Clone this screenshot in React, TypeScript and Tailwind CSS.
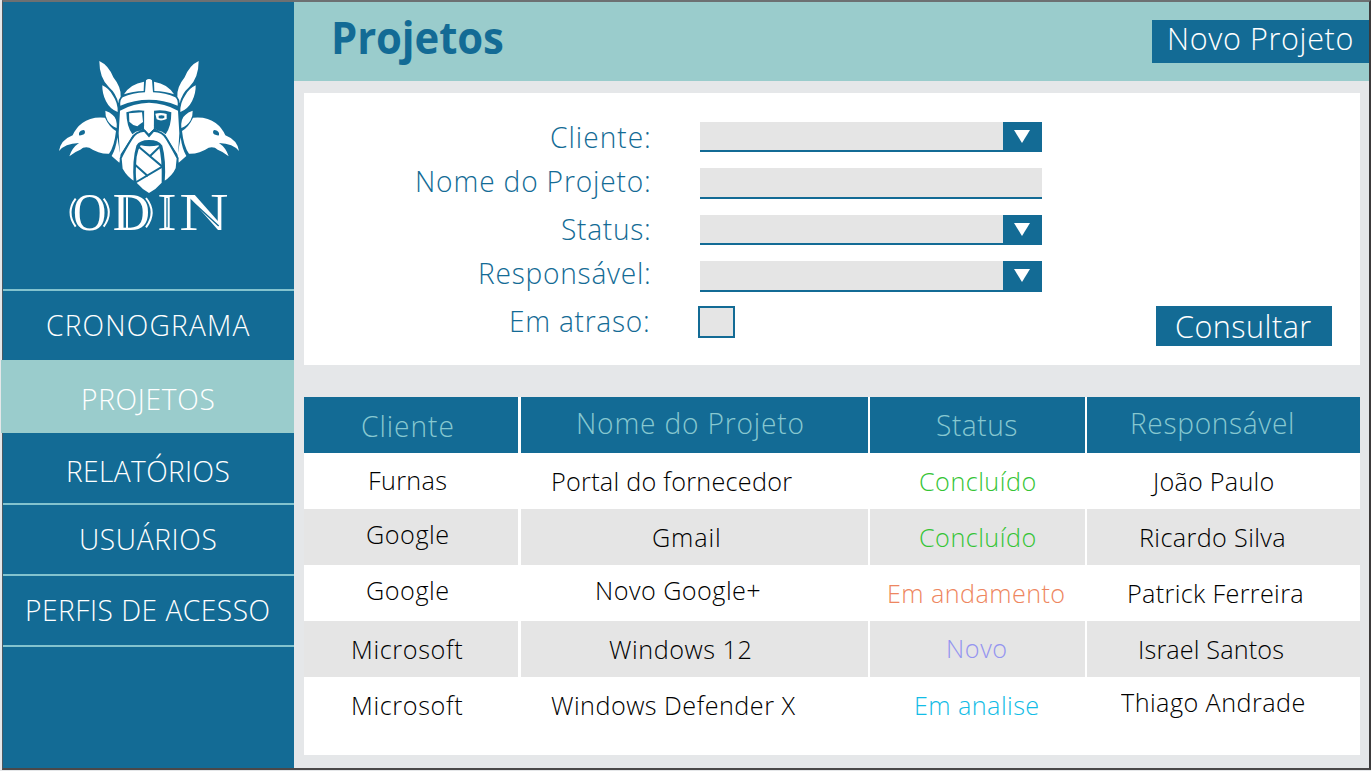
import { useLayoutEffect, useRef, useState } from "react";

type TextProps = { children: string; w: number; squeeze?: number; className?: string };

/* One line of text, slightly narrowed and tracked so that its ink is exactly `w` pixels wide. */
function Fit({ children, w, squeeze = 0.97, className = "" }: TextProps) {
  const ref = useRef<HTMLSpanElement>(null);
  const [fit, setFit] = useState({ gap: 0, left: 0 });
  useLayoutEffect(() => {
    const el = ref.current;
    const ctx = document.createElement("canvas").getContext("2d");
    if (!el || !ctx) return;
    const cs = getComputedStyle(el);
    ctx.font = `${cs.fontWeight} ${cs.fontSize} ${cs.fontFamily}`;
    const m = ctx.measureText(children);
    const ink = m.actualBoundingBoxLeft + m.actualBoundingBoxRight;
    setFit({ gap: (w / squeeze - ink) / (children.length - 1), left: m.actualBoundingBoxLeft * squeeze });
  }, [children, w, squeeze]);
  return (
    <div className={className}>
      <span
        ref={ref}
        className="inline-block origin-left whitespace-nowrap"
        style={{ letterSpacing: fit.gap, marginLeft: fit.left, transform: `scaleX(${squeeze})` }}
      >
        {children}
      </span>
    </div>
  );
}

function Half() {
  return (
    <g>
      <path d="M148 33Q176 46 190 82Q214 112 212 140Q205 148 205 160Q198 130 177 112Q148 84 148 33Z" />
      <path d="M157 106Q176 114 189 137Q204 158 203 186Q180 178 168 154Q156 130 157 106Z" />
      <path d="M166 182Q180 186 188 195Q202 205 200 234Q182 226 173 212Q165 198 166 182Z" />
      <path
        fillRule="evenodd"
        d="M165 203Q122 199 97 219Q78 233 68 256Q32 270 27 303Q44 281 87 279Q66 293 58 319Q74 305 91 299Q101 289 118 293Q146 312 177 311Q193 290 198 243Q177 230 165 203ZM87 249Q91 240 102 240Q108 246 102 253Q94 257 87 256Z"
      />
      <path d="M202 262L212 320L208 338L185 318Q198 296 202 262Z" />
      <path d="M222 133Q240 102 282 95L281 123Q248 124 222 133Z" />
    </g>
  );
}

function Logo() {
  return (
    <svg viewBox="0 0 600 570" className="ml-[47px] mt-12 h-[190px] w-[200px] overflow-visible" fill="#fff">
      <Half />
      <g transform="matrix(-1 0 0 1 594 0)">
        <Half />
      </g>
      <path d="M288 91Q297 83 306 91L309 127Q348 129 376 142Q385 149 383 167Q297 132 211 167Q209 149 218 142Q248 129 285 127Z" />
      <path d="M210 182Q250 159 297 158Q344 159 384 182L388 250L384 316L345 256H249L210 316L206 250Z" />
      <g fill="#136b95">
        <path d="M229 187Q256 178 283 182L283 228L272 243Q260 240 247 253Q230 230 229 187Z" />
        <path d="M312 182Q340 178 364 187Q364 230 347 253Q334 240 322 243L311 228Z" />
        <path d="M281 225L283 238L296 251L310 238L312 225L322 243L330 252L297 265L262 252L272 243Z" />
      </g>
      <path d="M283 184H311V236L297 250L283 236Z" />
      <path d="M237 190L276 187L279 216Q270 221 262 229Q249 227 238 215Z" />
      <path fillRule="evenodd" d="M316 191Q333 186 350 192V207Q333 215 320 208ZM326 197V204Q335 208 343 203V197Q334 194 326 197Z" />
      <path
        stroke="#136b95"
        strokeWidth="6"
        d="M283 242Q256 245 245 266Q223 301 212 325L215 357Q230 384 254 398Q249 330 262 288Q270 273 297 273Q324 273 334 288Q346 330 341 398Q370 379 380 355L383 325Q370 300 350 266Q339 245 311 242L297 258Z"
      />
      <path d="M272 286Q298 292 326 286Q337 325 335 398Q318 418 297 429Q277 418 266 404Q253 400 260 320Q263 300 272 286Z" />
      <path d="M267 291L337 350L259 396M328 291L298 320M256 345L294 379" fill="none" stroke="#136b95" strokeWidth="6" />
      <g fontFamily="'Liberation Serif', serif" fontSize="160">
        <text x="69" y="540" textLength="100" lengthAdjust="spacingAndGlyphs">O</text>
        <text x="188" y="540" textLength="112" lengthAdjust="spacingAndGlyphs">D</text>
        <text x="322" y="540" textLength="58" lengthAdjust="spacingAndGlyphs">I</text>
        <text x="388" y="540" textLength="148" lengthAdjust="spacingAndGlyphs">N</text>
      </g>
      <g fill="none" stroke="#fff" strokeWidth="6">
        <path d="M77 446Q46 487 77 530M161 446Q192 487 161 530" />
        <path d="M231 442V534M288 444Q322 487 288 532" />
      </g>
      <path d="M351 444V532M424 452L506 528" fill="none" stroke="#136b95" strokeWidth="4" />
    </svg>
  );
}

function Arrow() {
  return (
    <div className="flex h-full w-[39px] justify-center bg-[#136b95] pr-px pt-2">
      <svg viewBox="0 0 16 13" className="h-[13px] w-4" fill="#fff">
        <path d="M0 0H16L8 13Z" />
      </svg>
    </div>
  );
}

function Field({ select }: { select?: boolean }) {
  return (
    <div className="flex h-[30.4px] w-[342.4px] justify-end self-end border-b-2 border-[#136b95] bg-[#e5e5e5]">
      {select && <div className="h-[30px]"><Arrow /></div>}
    </div>
  );
}

const labels = [
  { t: "Cliente:", w: 98, c: "mt-[29px] ml-[247px]" },
  { t: "Nome do Projeto:", w: 232, c: "mt-[14px] ml-[113px]" },
  { t: "Status:", w: 87, c: "mt-[18px] ml-[258px]" },
  { t: "Responsável:", w: 169, c: "mt-[14px] ml-[176px]" },
  { t: "Em atraso:", w: 137, c: "mt-[18px] ml-[207px]" },
];

const heads = [
  { t: "Cliente", w: 91, c: "mt-[14px] ml-[58px]" },
  { t: "Nome do Projeto", w: 225, c: "mt-[11px] ml-[57px]" },
  { t: "Status", w: 80, c: "mt-[13px] ml-[67px]" },
  { t: "Responsável", w: 160, c: "mt-[11px] ml-[45px]" },
];

const rows = [
  [
    { t: "Furnas", w: 76, c: "mt-3 ml-[66px]" },
    { t: "Portal do fornecedor", w: 239, c: "mt-[13px] ml-8" },
    { t: "Concluído", w: 115, c: "mt-[13px] ml-[50px] text-[#35c435]" },
    { t: "João Paulo", w: 123, c: "mt-[13px] ml-[63px]" },
  ],
  [
    { t: "Google", w: 81, c: "mt-2.5 ml-[63px]" },
    { t: "Gmail", w: 66, c: "mt-[13px] ml-[132px]" },
    { t: "Concluído", w: 115, c: "mt-[13px] ml-[50px] text-[#35c435]" },
    { t: "Ricardo Silva", w: 143, c: "mt-[13px] ml-[54px]" },
  ],
  [
    { t: "Google", w: 81, c: "mt-2.5 ml-[63px]" },
    { t: "Novo Google+", w: 163, c: "mt-2.5 ml-[76px]" },
    { t: "Em andamento", w: 175, c: "mt-[13px] ml-[19px] text-[#ee8660]" },
    { t: "Patrick Ferreira", w: 173, c: "mt-[13px] ml-[42px]" },
  ],
  [
    { t: "Microsoft", w: 110, c: "mt-[13px] ml-[49px]" },
    { t: "Windows 12", w: 142, c: "mt-[13px] ml-[88px]" },
    { t: "Novo", w: 58, c: "mt-3 ml-[78px] text-[#9494f0]" },
    { t: "Israel Santos", w: 143, c: "mt-[13px] ml-[53px]" },
  ],
  [
    { t: "Microsoft", w: 110, c: "mt-[13px] ml-[49px]" },
    { t: "Windows Defender X", w: 244, c: "mt-[13px] ml-[30px]" },
    { t: "Em analise", w: 122, c: "mt-[13px] ml-[46px] text-[#12bce6]" },
    { t: "Thiago Andrade", w: 183, c: "mt-2.5 ml-[34px]" },
  ],
];

const columns = "grid grid-cols-[214.4px_347px_214.6px_273px] gap-x-[2.3px]";

export default function App() {
  return (
    <div className="h-[771px] w-[1371px] overflow-hidden bg-[#e5e7e9] pl-[2px] font-['Open_Sans',sans-serif] font-[330]">
      <div className="flex h-[770px] w-[1369px] border-2 border-b-2 border-l border-t-[#6d7072] border-r-[#3c3a3b] border-b-[#4a4849] border-l-[#4b5a63]">
        <aside className="w-[291px] shrink-0 bg-[#136b95] text-[29px] leading-[30px] text-white">
          <div className="flow-root h-[287px]">
            <Logo />
          </div>
          <nav>
            <div className="h-[71px] border-t-2 border-[#83c3ce]">
              <Fit w={203} className="ml-11 mt-[19px]">CRONOGRAMA</Fit>
            </div>
            <div className="-ml-0.5 flow-root h-[73px] bg-[#9acccc]">
              <Fit w={131} className="ml-[82px] mt-6">PROJETOS</Fit>
            </div>
            <div className="flow-root h-[70px]">
              <Fit w={161} className="ml-[65px] mt-[23px]">RELATÓRIOS</Fit>
            </div>
            <div className="h-[71px] border-t-2 border-[#83c3ce]">
              <Fit w={135} className="ml-[78px] mt-[19px]">USUÁRIOS</Fit>
            </div>
            <div className="h-[73px] border-y-2 border-[#83c3ce]">
              <Fit w={242} className="ml-6 mt-[19px]">PERFIS DE ACESSO</Fit>
            </div>
          </nav>
        </aside>

        <main className="w-[1075px] shrink-0">
          <header className="flex h-[79px] justify-between bg-[#9acccc]">
            <Fit w={168} squeeze={0.94} className="ml-[41px] mt-[9px] text-[44.5px] font-bold leading-[51px] text-[#136b95]">Projetos</Fit>
            <button className="mt-[18px] flex h-[43px] w-[217px] bg-[#136b95] text-[31.5px] leading-[41px] text-white">
              <Fit w={182} className="-mt-[3px] ml-[18px]">Novo Projeto</Fit>
            </button>
          </header>

          <section className="ml-2.5 mt-3 flex h-[272px] w-[1056px] bg-white">
            <div className="w-[395px] text-[29px] leading-[30px] text-[#136b95]">
              {labels.map((l) => (
                <div key={l.t} className="flow-root">
                  <Fit w={l.w} className={l.c}>{l.t}</Fit>
                </div>
              ))}
            </div>
            <div className="flex w-[343px] flex-col gap-4 pt-[29px]">
              <Field select />
              <Field />
              <Field select />
              <Field select />
              <div className="-ml-[0.6px] -mt-[1.6px] h-8 w-[37px] border-2 border-[#136b95] bg-[#e5e5e5]" />
            </div>
            <button className="ml-[114px] mt-[213px] flex h-10 w-44 bg-[#136b95] text-[31.5px] leading-[41px] text-white">
              <Fit w={135} className="-mt-px ml-5">Consultar</Fit>
            </button>
          </section>

          <section className="ml-2.5 mt-8 h-[358px] w-[1056px] bg-white text-[26px] leading-[30px] text-black">
            <div className={`${columns} h-14 text-[29px] text-[#87c8d0]`}>
              {heads.map((h) => (
                <div key={h.t} className="flow-root bg-[#136b95]">
                  <Fit w={h.w} className={h.c}>{h.t}</Fit>
                </div>
              ))}
            </div>
            {rows.map((row, r) => (
              <div key={r} className={`${columns} h-14`}>
                {row.map((cell, c) => (
                  <div key={c} className={r % 2 ? "flow-root bg-[#e5e5e5]" : "flow-root"}>
                    <Fit w={cell.w} className={cell.c}>{cell.t}</Fit>
                  </div>
                ))}
              </div>
            ))}
          </section>
        </main>
      </div>
    </div>
  );
}
